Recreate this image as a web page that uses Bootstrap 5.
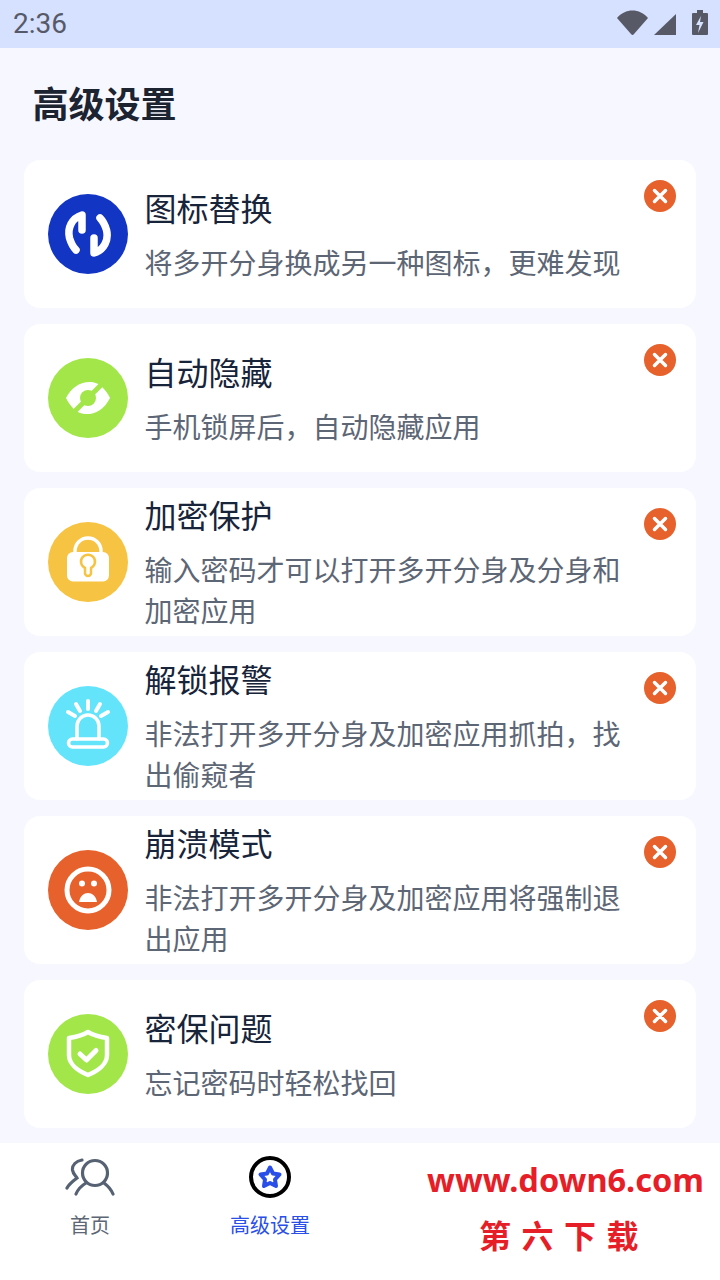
<!DOCTYPE html>
<html lang="zh-CN">
<head>
  <meta charset="UTF-8">
  <title>高级设置</title>
  <link href="https://cdn.jsdelivr.net/npm/bootstrap@5.3.0/dist/css/bootstrap.min.css" rel="stylesheet">
  <style>
    body { width: 720px; height: 1280px; overflow: hidden; background: #f7f8ff; font-family: "Noto Sans CJK SC", "Noto Sans", sans-serif; }
    .status-bar { height: 48px; background: #d6e0ff; color: #565a68; padding: 0 12px 0 13px; }
    .status-time { font-family: Roboto, sans-serif; font-size: 28px; line-height: 50px; }
    .page-head { height: 112px; padding: 0 32.500px; margin: 0; font-size: 36px; line-height: 108px; font-weight: 700; color: #1c2331; }
    .set-list { padding: 0 24px; gap: 16px; }
    .set-item { height: 148px; border: 0; border-radius: 16px; background: #fff; padding: 0 20px 0 24px; }
    .set-icon { width: 80px; height: 80px; flex: none; margin-right: 16.500px; }
    .set-text { padding-bottom: 2px; }
    .set-title { font-size: 32px; line-height: 47px; color: #17243a; margin-bottom: 11px; }
    .set-desc { font-size: 28px; line-height: 41px; color: #5d6675; }
    .set-close { width: 32px; height: 32px; flex: none; margin-top: 20px; margin-left: 14.500px; }
    .tab-bar { height: 137px; margin-top: 15px; background: #fff; }
    .tab-item { width: 180px; padding-top: 12px; font-size: 20px; line-height: 28px; color: #5d6675; }
    .tab-on { color: #2a4fe8; }
    .tab-icon { height: 44px; margin-bottom: 12px; }
    .mark-box { width: 360px; color: #e61e28; font-weight: 700; padding: 12px 16px 0 0; }
    .mark-url { font-size: 32.500px; line-height: 50px; font-family: "Noto Sans", sans-serif; }
    .mark-name { font-size: 32px; line-height: 60px; letter-spacing: 10.500px; margin-right: 55px; margin-top: -1px; }
  </style>
</head>
<body>

<div class="status-bar d-flex justify-content-between align-items-center">
  <span class="status-time">2:36</span>
  <svg width="92" height="48" viewBox="0 0 92 48" fill="#575a66">
    <path d="M1 18 C9 8 24 8 32 18 L18 34 Q16.500 36 15 34 Z"/>
    <path d="M38 35 L60 14 V35 Z"/>
    <path d="M81 10 h6 v3 h4 q1 0 1 1 v20 q0 1 -1 1 h-14 q-1 0 -1 -1 v-20 q0 -1 1 -1 h4 Z"/>
    <path d="M85 16 l-5 9 h3.500 l-1.500 8 l5.500 -11 h-3.500 Z" fill="#d6e0ff"/>
  </svg>
</div>

<h1 class="page-head">高级设置</h1>

<div class="set-list d-flex flex-column">

  <div class="card set-item flex-row align-items-center">
    <svg class="set-icon" viewBox="0 0 80 80">
      <circle cx="40" cy="40" r="40" fill="#1235c4"/>
      <g fill="none" stroke="#fff" stroke-width="7.500" stroke-linecap="round" stroke-linejoin="round">
        <path d="M34 36 V21 C24 24 19 34 21.500 44 C23 49 25 53 28 56"/>
        <path d="M46 44 V59 C56 56 61 46 58.500 36 C57 31 55 27 52 24"/>
      </g>
    </svg>
    <div class="set-text flex-grow-1">
      <div class="set-title">图标替换</div>
      <div class="set-desc">将多开分身换成另一种图标，更难发现</div>
    </div>
    <svg class="set-close align-self-start" viewBox="0 0 32 32"><circle cx="16" cy="16" r="16" fill="#e6612b"/><path d="M10.500 10.500 L21.500 21.500 M21.500 10.500 L10.500 21.500" stroke="#fff" stroke-width="3.500" stroke-linecap="round"/></svg>
  </div>

  <div class="card set-item flex-row align-items-center">
    <svg class="set-icon" viewBox="0 0 80 80">
      <circle cx="40" cy="40" r="40" fill="#a2e64a"/>
      <path d="M18 40 C24 28 34 23 44 24 C52 25 58 32 62 40 C56 52 46 57 36 56 C28 55 22 48 18 40 Z" fill="#fff"/>
      <path d="M24 56 L56 24" stroke="#a2e64a" stroke-width="5"/>
      <circle cx="40" cy="40" r="8" fill="#a2e64a"/>
    </svg>
    <div class="set-text flex-grow-1">
      <div class="set-title">自动隐藏</div>
      <div class="set-desc">手机锁屏后，自动隐藏应用</div>
    </div>
    <svg class="set-close align-self-start" viewBox="0 0 32 32"><circle cx="16" cy="16" r="16" fill="#e6612b"/><path d="M10.500 10.500 L21.500 21.500 M21.500 10.500 L10.500 21.500" stroke="#fff" stroke-width="3.500" stroke-linecap="round"/></svg>
  </div>

  <div class="card set-item flex-row align-items-center">
    <svg class="set-icon" viewBox="0 0 80 80">
      <circle cx="40" cy="40" r="40" fill="#f6c343"/>
      <path d="M27 32 V29 A13 13 0 0 1 53 29 V32" fill="none" stroke="#fff" stroke-width="3.500"/>
      <rect x="19" y="30" width="42" height="29.500" rx="6" fill="#fff"/>
      <path d="M37 46 A7 7 0 1 1 43 46 V51 A3 3 0 0 1 37 51 Z" fill="#fff" stroke="#f6c343" stroke-width="2.500"/>
    </svg>
    <div class="set-text flex-grow-1">
      <div class="set-title">加密保护</div>
      <div class="set-desc">输入密码才可以打开多开分身及分身和加密应用</div>
    </div>
    <svg class="set-close align-self-start" viewBox="0 0 32 32"><circle cx="16" cy="16" r="16" fill="#e6612b"/><path d="M10.500 10.500 L21.500 21.500 M21.500 10.500 L10.500 21.500" stroke="#fff" stroke-width="3.500" stroke-linecap="round"/></svg>
  </div>

  <div class="card set-item flex-row align-items-center">
    <svg class="set-icon" viewBox="0 0 80 80">
      <circle cx="40" cy="40" r="40" fill="#64e4fb"/>
      <g fill="none" stroke="#fff" stroke-linecap="round" stroke-linejoin="round">
        <rect x="20.500" y="53" width="39" height="8" rx="4" stroke-width="3.500"/>
        <path d="M29 53 V40 A11 11 0 0 1 51 40 V53" stroke-width="3.500"/>
        <path d="M40 15 V23 M28 18 L32 25 M52 18 L48 25 M20 26 L27 30 M60 26 L53 30" stroke-width="4"/>
      </g>
    </svg>
    <div class="set-text flex-grow-1">
      <div class="set-title">解锁报警</div>
      <div class="set-desc">非法打开多开分身及加密应用抓拍，找出偷窥者</div>
    </div>
    <svg class="set-close align-self-start" viewBox="0 0 32 32"><circle cx="16" cy="16" r="16" fill="#e6612b"/><path d="M10.500 10.500 L21.500 21.500 M21.500 10.500 L10.500 21.500" stroke="#fff" stroke-width="3.500" stroke-linecap="round"/></svg>
  </div>

  <div class="card set-item flex-row align-items-center">
    <svg class="set-icon" viewBox="0 0 80 80">
      <circle cx="40" cy="40" r="40" fill="#e6612b"/>
      <circle cx="40" cy="40" r="21" fill="none" stroke="#fff" stroke-width="5"/>
      <circle cx="34" cy="33.500" r="3" fill="#fff"/>
      <circle cx="46" cy="33.500" r="3" fill="#fff"/>
      <path d="M31 52 C32 46 36 43 40 43 C44 43 48 46 49 52 Z" fill="#fff"/>
    </svg>
    <div class="set-text flex-grow-1">
      <div class="set-title">崩溃模式</div>
      <div class="set-desc">非法打开多开分身及加密应用将强制退出应用</div>
    </div>
    <svg class="set-close align-self-start" viewBox="0 0 32 32"><circle cx="16" cy="16" r="16" fill="#e6612b"/><path d="M10.500 10.500 L21.500 21.500 M21.500 10.500 L10.500 21.500" stroke="#fff" stroke-width="3.500" stroke-linecap="round"/></svg>
  </div>

  <div class="card set-item flex-row align-items-center">
    <svg class="set-icon" viewBox="0 0 80 80">
      <circle cx="40" cy="40" r="40" fill="#a2e64a"/>
      <path d="M40 18 C45 21 52 23 59 24 V41 C59 50 50 57 40 61 C30 57 21 50 21 41 V24 C28 23 35 21 40 18 Z" fill="none" stroke="#fff" stroke-width="4.500" stroke-linejoin="round"/>
      <path d="M32 40 L38.500 46 L48 36.500" fill="none" stroke="#fff" stroke-width="5" stroke-linecap="round" stroke-linejoin="round"/>
    </svg>
    <div class="set-text flex-grow-1">
      <div class="set-title">密保问题</div>
      <div class="set-desc">忘记密码时轻松找回</div>
    </div>
    <svg class="set-close align-self-start" viewBox="0 0 32 32"><circle cx="16" cy="16" r="16" fill="#e6612b"/><path d="M10.500 10.500 L21.500 21.500 M21.500 10.500 L10.500 21.500" stroke="#fff" stroke-width="3.500" stroke-linecap="round"/></svg>
  </div>

</div>

<div class="tab-bar d-flex">
  <div class="tab-item d-flex flex-column align-items-center">
    <svg class="tab-icon" width="50" height="44" viewBox="0 0 50 44" fill="none" stroke="#566273" stroke-width="3.200" stroke-linecap="round">
      <circle cx="30" cy="18" r="12.500"/>
      <path d="M11 39 C13 34 16 31 21 28"/>
      <path d="M39 28 C43 31 46 34 48 39"/>
      <path d="M17 5 C11 6 7 10 7.500 15 C8 19 11 21 12 23 C8 26 4 29 2 33"/>
    </svg>
    <span>首页</span>
  </div>
  <div class="tab-item tab-on d-flex flex-column align-items-center">
    <svg class="tab-icon" width="44" height="44" viewBox="0 0 44 44">
      <circle cx="22" cy="22" r="19" fill="#fff" stroke="#000" stroke-width="4"/>
      <path d="M22 12.500 L25 18.500 L31.500 19.500 L27 24.500 L28 31 L22 28 L16 31 L17 24.500 L12.500 19.500 L19 18.500 Z" fill="#fff" stroke="#2a4fe8" stroke-width="4" stroke-linejoin="round"/>
    </svg>
    <span>高级设置</span>
  </div>
  <div class="mark-box d-flex flex-column align-items-end">
    <div class="mark-url">www.down6.com</div>
    <div class="mark-name">第六下载</div>
  </div>
</div>

<script src="https://cdn.jsdelivr.net/npm/bootstrap@5.3.0/dist/js/bootstrap.bundle.min.js"></script>
</body>
</html>
